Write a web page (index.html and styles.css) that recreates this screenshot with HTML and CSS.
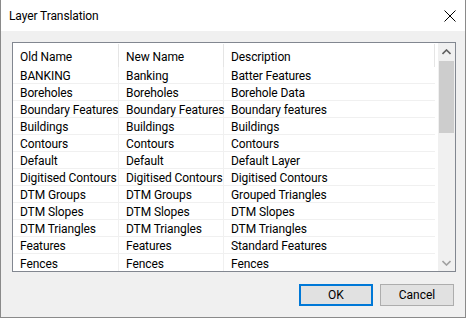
FILE: index.html
```html
<!DOCTYPE html>
<html>
<head>
<meta name="viewport" content="width=device-width, initial-scale=1">
<title>Layer Translation</title>
<link rel="stylesheet" href="styles.css">
</head>
<body>
<div class="window">
  <div class="titlebar">
    <span class="title">Layer Translation</span>
    <svg class="close" width="12" height="12" viewBox="0 0 12 12"><path d="M0.5 0.5 L11.5 11.5 M11.5 0.5 L0.5 11.5" stroke="#000" stroke-width="1"/></svg>
  </div>
  <div class="content">
    <div class="listbox">
      <div class="list">
        <div class="head">
          <div class="hcell c1">Old Name</div>
          <div class="hcell c2">New Name</div>
          <div class="hcell c3">Description</div>
        </div>
        <div class="row"><div class="cell c1">BANKING</div><div class="cell c2">Banking</div><div class="cell c3">Batter Features</div></div>
        <div class="row"><div class="cell c1">Boreholes</div><div class="cell c2">Boreholes</div><div class="cell c3">Borehole Data</div></div>
        <div class="row"><div class="cell c1">Boundary Features</div><div class="cell c2">Boundary Features</div><div class="cell c3">Boundary features</div></div>
        <div class="row"><div class="cell c1">Buildings</div><div class="cell c2">Buildings</div><div class="cell c3">Buildings</div></div>
        <div class="row"><div class="cell c1">Contours</div><div class="cell c2">Contours</div><div class="cell c3">Contours</div></div>
        <div class="row"><div class="cell c1">Default</div><div class="cell c2">Default</div><div class="cell c3">Default Layer</div></div>
        <div class="row"><div class="cell c1">Digitised Contours</div><div class="cell c2">Digitised Contours</div><div class="cell c3">Digitised Contours</div></div>
        <div class="row"><div class="cell c1">DTM Groups</div><div class="cell c2">DTM Groups</div><div class="cell c3">Grouped Triangles</div></div>
        <div class="row"><div class="cell c1">DTM Slopes</div><div class="cell c2">DTM Slopes</div><div class="cell c3">DTM Slopes</div></div>
        <div class="row"><div class="cell c1">DTM Triangles</div><div class="cell c2">DTM Triangles</div><div class="cell c3">DTM Triangles</div></div>
        <div class="row"><div class="cell c1">Features</div><div class="cell c2">Features</div><div class="cell c3">Standard Features</div></div>
        <div class="row last"><div class="cell c1">Fences</div><div class="cell c2">Fences</div><div class="cell c3">Fences</div></div>
      </div>
      <div class="scrollbar">
        <div class="arrow">
          <svg width="9" height="6" viewBox="0 0 9 6"><path d="M0.5 5 L4.5 1 L8.5 5" stroke="#606060" stroke-width="1.6" fill="none"/></svg>
        </div>
        <div class="track"><div class="thumb"></div></div>
        <div class="arrow">
          <svg width="9" height="6" viewBox="0 0 9 6"><path d="M0.5 1 L4.5 5 L8.5 1" stroke="#a0a0a0" stroke-width="1.6" fill="none"/></svg>
        </div>
      </div>
    </div>
    <div class="buttons">
      <button class="btn default">OK</button>
      <button class="btn">Cancel</button>
    </div>
  </div>
</div>
</body>
</html>
```
FILE: styles.css
```css
* {
  box-sizing: border-box;
}

body {
  margin: 0;
  font-family: Roboto, "Liberation Sans", Arial, sans-serif;
  font-size: 12px;
  color: #000;
  background: #f0f0f0;
}

.window {
  width: 466px;
  height: 318px;
  border: 1px solid #8a8a8a;
  border-top: none;
  background: #f0f0f0;
  display: flex;
  flex-direction: column;
}

.titlebar {
  height: 31px;
  background: #fff;
  display: flex;
  align-items: center;
  justify-content: space-between;
  padding: 1px 9px 0 8px;
}

.title {
  font-size: 12px;
  letter-spacing: -0.1px;
}

.close {
  margin-top: -1px;
}

.content {
  padding: 11px 9px 0 11px;
}

.listbox {
  width: 444px;
  height: 230px;
  border: 1px solid #828790;
  background: #fff;
  display: flex;
}

.list {
  flex: 1;
  padding-right: 3px;
}

.head {
  display: flex;
  height: 24px;
  align-items: stretch;
}

.hcell {
  display: flex;
  align-items: center;
  padding: 2px 0 0 7px;
  border-right: 1px solid #e5e5e5;
  margin: 1px 0 0 0;
  letter-spacing: -0.1px;
}

.row {
  display: flex;
  height: 17px;
  border-bottom: 1px solid #f0f0f0;
}

.row.last {
  border-bottom: none;
}

.cell {
  display: flex;
  align-items: center;
  padding: 2px 0 0 7px;
  border-right: 1px solid #f0f0f0;
  white-space: nowrap;
  letter-spacing: -0.1px;
}

.c1 {
  width: 106px;
}

.c2 {
  width: 105px;
}

.c3 {
  flex: 1;
}

.cell.c3 {
  border-right: none;
}

.scrollbar {
  width: 17px;
  background: #f0f0f0;
  display: flex;
  flex-direction: column;
}

.arrow {
  height: 17px;
  display: flex;
  align-items: center;
  justify-content: center;
}

.track {
  flex: 1;
}

.thumb {
  height: 72px;
  margin: 1px 1px 0 1px;
  background: #cdcdcd;
}

.buttons {
  display: flex;
  justify-content: flex-end;
  gap: 7px;
  margin-top: 12px;
  padding-right: 2px;
}

.btn {
  width: 74px;
  height: 22px;
  font-family: Roboto, "Liberation Sans", Arial, sans-serif;
  font-size: 12px;
  background: #e1e1e1;
  border: 1px solid #adadad;
  padding: 0;
  color: #000;
}

.btn.default {
  border: 2px solid #0078d7;
}
```
